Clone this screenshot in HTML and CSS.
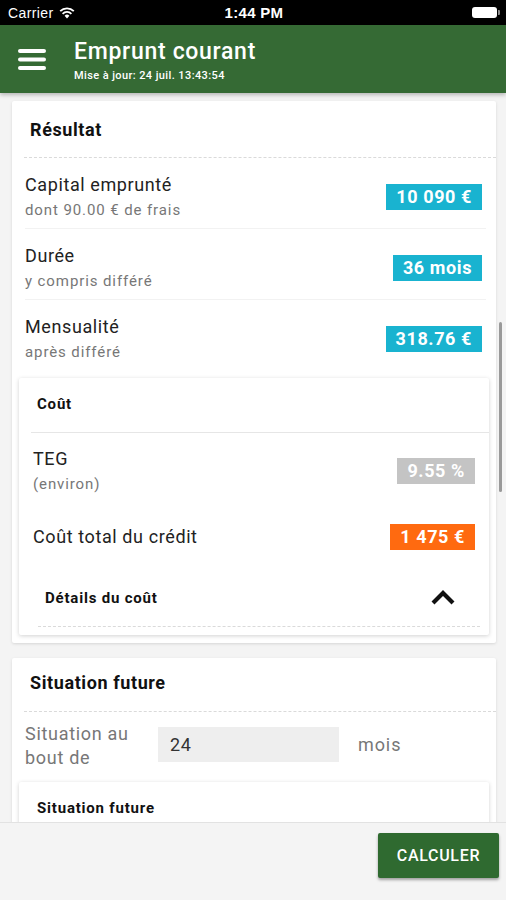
FILE: index.html
```html
<!DOCTYPE html>
<html lang="fr">
<head>
  <meta charset="UTF-8" />
  <title>Emprunt courant</title>
  <link rel="stylesheet" href="styles.css">
</head>
<body>
  <div class="status-bar">
    <span class="carrier">Carrier
      <svg class="wifi" width="16" height="12" viewBox="0 0 16 12">
        <path d="M8 11.5 L5.6 8.8 A3.4 3.4 0 0 1 10.4 8.8 Z" fill="#fff"/>
        <path d="M3.6 6.8 A6.2 6.2 0 0 1 12.4 6.8" stroke="#fff" stroke-width="1.8" fill="none"/>
        <path d="M1.2 4.2 A9.6 9.6 0 0 1 14.8 4.2" stroke="#fff" stroke-width="1.8" fill="none"/>
      </svg>
    </span>
    <span class="clock">1:44 PM</span>
    <span class="battery"><span class="battery-fill"></span></span>
  </div>

  <header class="appbar">
    <svg class="menu" width="28" height="22" viewBox="0 0 28 22">
      <rect x="0" y="0" width="28" height="4" rx="2" fill="#fff"/>
      <rect x="0" y="8.5" width="28" height="4" rx="2" fill="#fff"/>
      <rect x="0" y="17" width="28" height="4" rx="2" fill="#fff"/>
    </svg>
    <div class="titles">
      <h1>Emprunt courant</h1>
      <div class="updated">Mise à jour: 24 juil. 13:43:54</div>
    </div>
  </header>

  <main class="content">
    <section class="card">
      <h2 class="card-title">Résultat</h2>
      <div class="dashed"></div>
      <div class="row">
        <div>
          <div class="label">Capital emprunté</div>
          <div class="sub">dont 90.00 € de frais</div>
        </div>
        <span class="badge blue">10 090 €</span>
      </div>
      <div class="row">
        <div>
          <div class="label">Durée</div>
          <div class="sub">y compris différé</div>
        </div>
        <span class="badge blue">36 mois</span>
      </div>
      <div class="row last">
        <div>
          <div class="label">Mensualité</div>
          <div class="sub">après différé</div>
        </div>
        <span class="badge blue">318.76 €</span>
      </div>

      <div class="inner-card">
        <h3 class="inner-title">Coût</h3>
        <div class="solid"></div>
        <div class="irow">
          <div>
            <div class="label">TEG</div>
            <div class="sub">(environ)</div>
          </div>
          <span class="badge grey">9.55 %</span>
        </div>
        <div class="irow single">
          <div class="label">Coût total du crédit</div>
          <span class="badge orange">1 475 €</span>
        </div>
        <div class="details">
          <span>Détails du coût</span>
          <svg width="26" height="18" viewBox="0 0 26 18">
            <path d="M3 15 L13 5 L23 15" stroke="#111" stroke-width="4.2" fill="none" stroke-linejoin="miter"/>
          </svg>
        </div>
        <div class="dashed short"></div>
      </div>
    </section>

    <section class="card">
      <h2 class="card-title tight">Situation future</h2>
      <div class="dashed"></div>
      <div class="input-row">
        <label class="field-label" for="months">Situation au bout de</label>
        <input class="field" id="months" type="text" value="24" />
        <span class="unit">mois</span>
      </div>
      <div class="inner-card lower">
        <h3 class="inner-title">Situation future</h3>
      </div>
    </section>
  </main>

  <div class="scrollbar"></div>

  <footer class="bottom-bar">
    <button class="calc">CALCULER</button>
  </footer>
</body>
</html>
```

FILE: styles.css
```css
* {
  box-sizing: border-box;
}
body {
  margin: 0;
  height: 900px;
  display: flex;
  flex-direction: column;
  overflow: hidden;
  font-family: Roboto, "Liberation Sans", sans-serif;
  background-color: #f4f4f4;
  color: #222;
}

/* status bar */
.status-bar {
  height: 25px;
  background: #000;
  color: #fff;
  display: flex;
  align-items: center;
  justify-content: space-between;
  padding: 0 6px 0 8px;
  font-family: "Liberation Sans", sans-serif;
  font-size: 14px;
}
.carrier {
  display: flex;
  align-items: center;
  gap: 5px;
  width: 120px;
  letter-spacing: 0.4px;
}
.clock {
  font-weight: bold;
  font-size: 15px;
  letter-spacing: 0.3px;
}
.battery {
  width: 120px;
  display: flex;
  justify-content: flex-end;
}
.battery-fill {
  width: 25px;
  height: 11px;
  background: #fff;
  border-radius: 3px;
  position: relative;
  margin-right: 3px;
}
.battery-fill::after {
  content: "";
  position: absolute;
  right: -3px;
  top: 3px;
  width: 2px;
  height: 5px;
  background: #888;
  border-radius: 0 1px 1px 0;
}

/* app bar */
.appbar {
  height: 68px;
  background-color: #356a34;
  display: flex;
  align-items: center;
  padding-left: 18px;
  box-shadow: 0 2px 4px rgba(0, 0, 0, 0.25);
  position: relative;
  z-index: 2;
}
.menu {
  margin-top: 2px;
}
.titles {
  margin-left: 28px;
  color: #fff;
}
.titles h1 {
  margin: 1px 0 0 0;
  font-size: 23px;
  font-weight: 500;
  line-height: 28px;
  letter-spacing: 0.7px;
}
.updated {
  font-size: 11px;
  font-weight: 500;
  margin-top: 3px;
  letter-spacing: 0.4px;
}

/* content */
.content {
  flex: 1;
  overflow: hidden;
  padding: 8px 10px 0 12px;
}
.card {
  background: #fff;
  border-radius: 2px;
  box-shadow: 0 1px 3px rgba(0, 0, 0, 0.12);
  padding-bottom: 8px;
  margin-bottom: 15px;
}
.card-title {
  margin: 0;
  height: 56px;
  line-height: 58px;
  padding-left: 18px;
  font-size: 18px;
  font-weight: bold;
  letter-spacing: 0.6px;
  color: #111;
}
.card-title.tight {
  height: 53px;
  line-height: 50px;
}
.dashed {
  border-top: 1px dashed #dadada;
  margin-left: 12px;
}
.dashed.short {
  margin: 0 9px 0 19px;
}
.solid {
  border-top: 1px solid #e6e6e6;
  margin-left: 12px;
}
.row {
  display: flex;
  justify-content: space-between;
  align-items: center;
  margin: 0 10px 0 13px;
  padding: 16px 4px 8px 0;
  border-bottom: 1px solid #f2f2f2;
}
.row.last {
  border-bottom: none;
}
.label {
  font-size: 18px;
  line-height: 22px;
  letter-spacing: 0.6px;
  color: #222;
}
.sub {
  font-size: 15px;
  line-height: 20px;
  margin-top: 4px;
  letter-spacing: 0.9px;
  color: #777;
}
.badge {
  color: #fff;
  font-weight: bold;
  font-size: 18px;
  letter-spacing: 0.6px;
  height: 26px;
  line-height: 26px;
  padding: 0 10px;
}
.blue {
  background-color: #19b3d0;
}
.grey {
  background-color: #c4c4c4;
}
.orange {
  background-color: #ff6a10;
}

/* inner card */
.inner-card {
  margin: 8px 7px 0 7px;
  background: #fff;
  box-shadow: 0 1px 4px rgba(0, 0, 0, 0.18);
  border-radius: 2px;
  padding-bottom: 8px;
}
.inner-card.lower {
  margin-top: 12px;
}
.inner-title {
  margin: 0;
  height: 54px;
  line-height: 52px;
  padding-left: 18px;
  font-size: 15px;
  font-weight: bold;
  letter-spacing: 0.8px;
  color: #111;
}
.irow {
  display: flex;
  justify-content: space-between;
  align-items: center;
  padding: 15px 14px 9px 14px;
}
.irow.single {
  height: 67px;
  padding: 0 14px;
}
.details {
  height: 56px;
  display: flex;
  justify-content: space-between;
  align-items: center;
  padding: 0 33px 0 26px;
  font-size: 15px;
  font-weight: bold;
  letter-spacing: 0.8px;
  color: #111;
}
.details svg {
  margin-top: -2px;
}

/* situation future */
.input-row {
  display: flex;
  align-items: center;
  padding: 10px 13px 0 13px;
}
.field-label {
  width: 120px;
  font-size: 18px;
  line-height: 24px;
  letter-spacing: 0.7px;
  color: #777;
}
.field {
  margin-left: 13px;
  width: 181px;
  height: 35px;
  border: none;
  background: #eeeeee;
  font-family: inherit;
  font-size: 18px;
  letter-spacing: 0.6px;
  color: #333;
  padding: 0 12px;
  margin-top: -4px;
}
.unit {
  margin-left: 19px;
  font-size: 18px;
  letter-spacing: 0.9px;
  color: #777;
  margin-top: -4px;
}

/* overlays */
.scrollbar {
  position: absolute;
  left: 499px;
  top: 322px;
  width: 3px;
  height: 170px;
  background: #9a9a9a;
  border-radius: 2px;
}
.bottom-bar {
  height: 78px;
  flex-shrink: 0;
  background: #f4f4f4;
  border-top: 1px solid #e2e2e2;
  display: flex;
  justify-content: flex-end;
  align-items: flex-start;
  padding: 10px 7px 0 0;
  position: relative;
  z-index: 2;
}
.calc {
  width: 121px;
  height: 45px;
  background-color: #2f6a30;
  color: #fff;
  border: none;
  border-radius: 2px;
  font-family: Roboto, "Liberation Sans", sans-serif;
  font-weight: 500;
  font-size: 16px;
  letter-spacing: 0.7px;
  box-shadow: 0 2px 3px rgba(0, 0, 0, 0.35);
}
```
